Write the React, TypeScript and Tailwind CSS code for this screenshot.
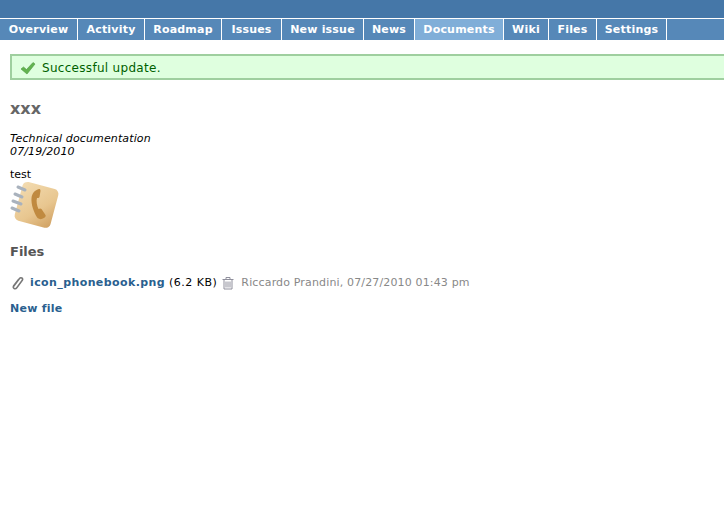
import React from 'react';

const tabs = ['Overview', 'Activity', 'Roadmap', 'Issues', 'New issue', 'News', 'Documents', 'Wiki', 'Files', 'Settings'];
const tabWidths = [78, 67, 77, 60, 82, 51, 89, 45, 48, 70];

function PhonebookIcon() {
  return (
    <svg width="50" height="50" viewBox="0 0 50 50" className="block">
      <defs>
        <linearGradient id="cover" x1="0" y1="0" x2="1" y2="1">
          <stop offset="0" stopColor="#f3dcb2" />
          <stop offset="0.6" stopColor="#e8c68f" />
          <stop offset="1" stopColor="#cf9f60" />
        </linearGradient>
      </defs>
      <rect x="8" y="6" width="37" height="40" rx="5" transform="rotate(15 27 26)" fill="url(#cover)" />
      <path transform="translate(2 0)" d="M27 10c-4 1-7 4-7.500 9-.5 6 2 14 6 20 2 1.500 4 1.500 6.500 0 1.500-1 2-2 1.500-3l-4-6c-1-1-2-.5-3 0-1.500-3-2.500-8-1.500-11 1 0 2 0 2.500-1l1-6c0-1.500-.5-2-1.500-2z" fill="#c08a40" />
      <g stroke="#a9b2bd" strokeWidth="3" strokeLinecap="round">
        <path d="M8 8l7 3" />
        <path d="M5 15l7 3" />
        <path d="M3 22l8 3" />
        <path d="M2 29l7 3" />
      </g>
    </svg>
  );
}

function CheckIcon() {
  return (
    <svg width="16" height="16" viewBox="0 0 16 16" className="block">
      <path d="M1 9l2.500-2 3 2.500L13 2.500l2 1.500-8 10z" fill="#62b34f" stroke="#4d9a40" strokeWidth="0.6" />
    </svg>
  );
}

function ClipIcon() {
  return (
    <svg width="14" height="14" viewBox="0 0 14 14" className="block">
      <path d="M2.500 10.500L8.500 2.500c1.300-1.700 4-.2 2.800 1.800L5.800 11.800c-1.500 2-4.500.4-3.300-1.800L7.500 3.500" fill="none" stroke="#777" strokeWidth="1.500" strokeLinecap="round" />
    </svg>
  );
}

function TrashIcon() {
  return (
    <svg width="12" height="14" viewBox="0 0 12 14" className="block">
      <path d="M.5 3.500h11M4 3V1.500h4V3M2 3.500v9.500h8V3.500M4 5.500v6M6 5.500v6M8 5.500v6" fill="none" stroke="#8f8f9c" strokeWidth="1" />
    </svg>
  );
}

export default function App() {
  return (
    <div className="min-h-[517px] overflow-hidden bg-white text-[11px] text-black [font-family:'DejaVu_Sans',Verdana,sans-serif]">
      <div className="h-[18px] bg-[#4577a8]" />
      <div className="mt-px flex h-[21px] bg-[#5688b8]">
        {tabs.map((tab, i) => (
          <div
            key={tab}
            style={{ width: tabWidths[i] }}
            className={`flex shrink-0 items-center justify-center border-r border-white pt-[2px] text-[11px] font-bold tracking-[0.2px] text-white ${tab === 'Documents' ? 'bg-[#80aed8]' : ''}`}
          >
            {tab}
          </div>
        ))}
      </div>

      <div className="ml-[10px] mt-[14px] flex h-[26px] w-[730px] items-center gap-[6px] border-2 border-[#9fcf9f] bg-[#dfffdf] pl-[8px] text-[12px] tracking-[0.3px] text-[#005f00]">
        <span className="pt-[2px]">
          <CheckIcon />
        </span>
        <span className="pt-[1px]">Successful update.</span>
      </div>

      <div className="px-[10px]">
        <h2 className="mt-[19px] text-[16px] font-bold leading-[20px] text-[#666]">xxx</h2>
        <p className="mt-[13px] text-[11px] italic leading-[13px] tracking-[0.13px]">
          Technical documentation
          <br />
          07/19/2010
        </p>
        <p className="mt-[10px] leading-[13px]">test</p>
        <div className="-mt-[2px]">
          <PhonebookIcon />
        </div>
        <h3 className="mt-[15px] text-[13px] font-bold leading-[16px] text-[#555]">Files</h3>
        <div className="mt-[15px] flex h-[16px] items-center">
          <span className="ml-[1px] mr-[5px]">
            <ClipIcon />
          </span>
          <a className="font-bold tracking-[0.4px] text-[#2a5f8f]">icon_phonebook.png</a>
          <span className="ml-[4px] tracking-[0.5px]">(6.2 KB)</span>
          <span className="ml-[5px] mr-[7px]">
            <TrashIcon />
          </span>
          <span className="text-[11px] tracking-[0.15px] text-[#888]">Riccardo Prandini, 07/27/2010 01:43 pm</span>
        </div>
        <a className="mt-[11px] block font-bold leading-[13px] tracking-[0.25px] text-[#2a5f8f]">New file</a>
      </div>
    </div>
  );
}
